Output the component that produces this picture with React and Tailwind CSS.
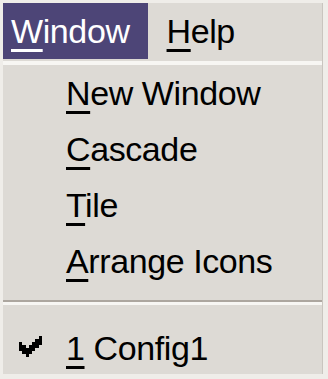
const items = [
  { key: 'N', rest: 'ew Window' },
  { key: 'C', rest: 'ascade' },
  { key: 'T', rest: 'ile' },
  { key: 'A', rest: 'rrange Icons' },
];

function Mn({ children }) {
  return <span className="underline decoration-[3px] underline-offset-[6px]">{children}</span>;
}

function Check() {
  const px = [
    [6, 0], [5, 1], [6, 1], [0, 2], [4, 2], [5, 2], [6, 2],
    [0, 3], [1, 3], [3, 3], [4, 3], [5, 3],
    [0, 4], [1, 4], [2, 4], [3, 4], [4, 4],
    [1, 5], [2, 5], [3, 5], [2, 6],
  ];
  return (
    <svg width="23" height="21" viewBox="0 0 7 7" preserveAspectRatio="none" shapeRendering="crispEdges">
      {px.map(([x, y]) => <rect key={`${x}-${y}`} x={x} y={y} width="1" height="1" fill="#000" />)}
    </svg>
  );
}

export default function App() {
  return (
    <div className="w-[328px] h-[379px] bg-[#efede9] pt-[3px] pl-[3px] overflow-hidden"
      style={{ fontFamily: '"Liberation Sans", Arial, sans-serif' }}>
      <div className="w-[320px] bg-[#dddad5] border-r border-[#c9c5bf] text-[34px] leading-[56px] tracking-[-0.4px] text-black">
        <div className="flex h-[56px]">
          <div className="bg-[#4d4577] text-white pl-[8px] pr-[18px]"><Mn>W</Mn>indow</div>
          <div className="pl-[19px]"><Mn>H</Mn>elp</div>
        </div>
        <div className="h-[2px]" />
        <div className="h-[4px] bg-[#f7f6f3]" />
        <div>
          {items.map(it => (
            <div key={it.key} className="h-[56px] pl-[63px]"><Mn>{it.key}</Mn>{it.rest}</div>
          ))}
        </div>
        <div className="h-[11px]" />
        <div className="h-[2px] bg-[#aca69f]" />
        <div className="h-[3px] bg-[#f7f6f3]" />
        <div className="h-[15px]" />
        <div className="h-[54px] flex items-start">
          <div className="w-[63px] pl-[16px] pt-[16px]"><Check /></div>
          <div><Mn>1</Mn> Config1</div>
        </div>
      </div>
    </div>
  );
}
